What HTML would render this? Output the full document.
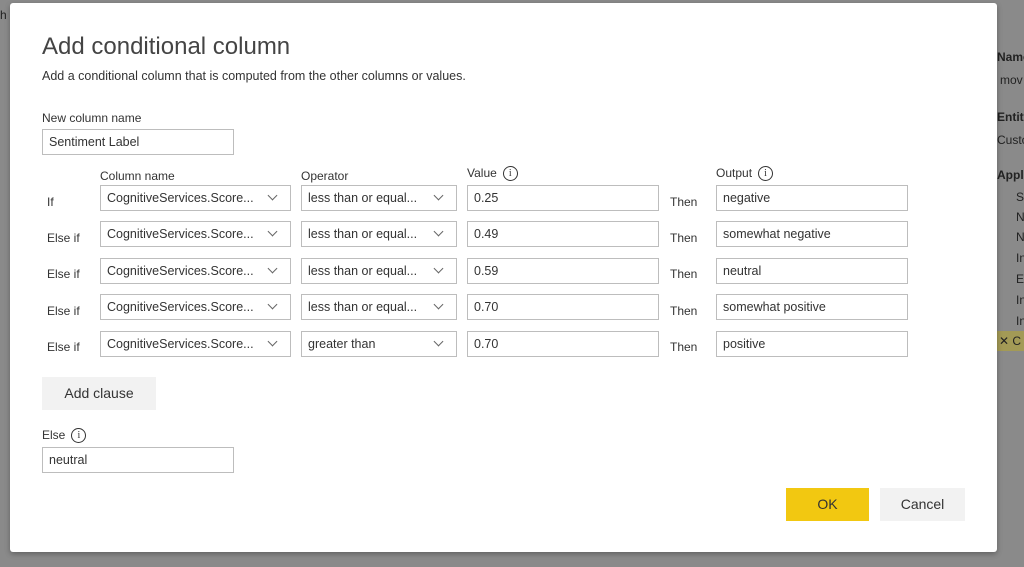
<!DOCTYPE html>
<html><head><meta charset="utf-8"><style>
body{margin:0;width:1024px;height:567px;background:#8a8a8a;font-family:"Liberation Sans","DejaVu Sans",sans-serif;position:relative;overflow:hidden;color:#222}
.a{position:absolute;white-space:nowrap}
.dlg{position:absolute;left:10px;top:3px;width:987px;height:549px;background:#fff;border-radius:3px;box-shadow:0 2px 6px rgba(0,0,0,.3)}
.box{position:absolute;border:1px solid #bdbdbd;background:#fff;box-sizing:border-box;height:26px;font-size:12.5px;line-height:24px;padding-left:6px;color:#333}
.lbl{font-size:12px;color:#333}
.chev{position:absolute;right:14px;top:6px;width:6px;height:6px;border-right:1px solid #666;border-bottom:1px solid #666;transform:rotate(45deg)}
.info{display:inline-block;width:13px;height:13px;border:1px solid #333;border-radius:50%;font-size:10px;line-height:13px;text-align:center;vertical-align:middle;margin-left:6px;font-family:"Liberation Serif",serif}
.side{position:absolute;left:997px;font-size:12px;color:#222}
</style></head><body>
<div class="a" style="left:0;top:8px;font-size:12px;color:#222">h</div>
<div class="side" style="top:50px;font-weight:bold">Name</div>
<div class="side" style="top:73px;left:1000px">mov</div>
<div class="side" style="top:110px;font-weight:bold">Entity</div>
<div class="side" style="top:133px">Custo</div>
<div class="side" style="top:168px;font-weight:bold">Appli</div>
<div class="side" style="top:190px;left:1016px">Se</div>
<div class="side" style="top:210px;left:1016px">N</div>
<div class="side" style="top:230px;left:1016px">N</div>
<div class="side" style="top:251px;left:1016px">In</div>
<div class="side" style="top:272px;left:1016px">Ex</div>
<div class="side" style="top:293px;left:1016px">In</div>
<div class="side" style="top:314px;left:1016px">In</div>
<div style="position:absolute;left:997px;top:331px;width:27px;height:20px;background:#a39a56"></div>
<div class="side" style="top:334px;left:999px">✕ C</div>
<div class="dlg"></div>
<div class="a" style="left:42px;top:33px;font-size:24px;color:#444">Add conditional column</div>
<div class="a" style="left:42px;top:69px;font-size:12.5px;color:#333">Add a conditional column that is computed from the other columns or values.</div>
<div class="a lbl" style="left:42px;top:111px">New column name</div>
<div class="box" style="left:42px;top:129px;width:192px">Sentiment Label</div>
<div class="a lbl" style="left:100px;top:169px">Column name</div>
<div class="a lbl" style="left:301px;top:169px">Operator</div>
<div class="a lbl" style="left:467px;top:166px">Value<span class="info">i</span></div>
<div class="a lbl" style="left:716px;top:166px">Output<span class="info">i</span></div>

<div class="a lbl" style="left:47px;top:195px">If</div>
<div class="box" style="left:100px;top:185px;width:191px">CognitiveServices.Score...<span class="chev"></span></div>
<div class="box" style="left:301px;top:185px;width:156px">less than or equal...<span class="chev"></span></div>
<div class="box" style="left:467px;top:185px;width:192px">0.25</div>
<div class="a lbl" style="left:670px;top:195px">Then</div>
<div class="box" style="left:716px;top:185px;width:192px">negative</div>

<div class="a lbl" style="left:47px;top:231px">Else if</div>
<div class="box" style="left:100px;top:221px;width:191px">CognitiveServices.Score...<span class="chev"></span></div>
<div class="box" style="left:301px;top:221px;width:156px">less than or equal...<span class="chev"></span></div>
<div class="box" style="left:467px;top:221px;width:192px">0.49</div>
<div class="a lbl" style="left:670px;top:231px">Then</div>
<div class="box" style="left:716px;top:221px;width:192px">somewhat negative</div>

<div class="a lbl" style="left:47px;top:267px">Else if</div>
<div class="box" style="left:100px;top:258px;width:191px">CognitiveServices.Score...<span class="chev"></span></div>
<div class="box" style="left:301px;top:258px;width:156px">less than or equal...<span class="chev"></span></div>
<div class="box" style="left:467px;top:258px;width:192px">0.59</div>
<div class="a lbl" style="left:670px;top:267px">Then</div>
<div class="box" style="left:716px;top:258px;width:192px">neutral</div>

<div class="a lbl" style="left:47px;top:304px">Else if</div>
<div class="box" style="left:100px;top:294px;width:191px">CognitiveServices.Score...<span class="chev"></span></div>
<div class="box" style="left:301px;top:294px;width:156px">less than or equal...<span class="chev"></span></div>
<div class="box" style="left:467px;top:294px;width:192px">0.70</div>
<div class="a lbl" style="left:670px;top:304px">Then</div>
<div class="box" style="left:716px;top:294px;width:192px">somewhat positive</div>

<div class="a lbl" style="left:47px;top:340px">Else if</div>
<div class="box" style="left:100px;top:331px;width:191px">CognitiveServices.Score...<span class="chev"></span></div>
<div class="box" style="left:301px;top:331px;width:156px">greater than<span class="chev"></span></div>
<div class="box" style="left:467px;top:331px;width:192px">0.70</div>
<div class="a lbl" style="left:670px;top:340px">Then</div>
<div class="box" style="left:716px;top:331px;width:192px">positive</div>

<div class="a" style="left:42px;top:377px;width:114px;height:33px;background:#f2f2f2;font-size:14px;line-height:33px;text-align:center;color:#333">Add clause</div>
<div class="a lbl" style="left:42px;top:428px">Else<span class="info">i</span></div>
<div class="box" style="left:42px;top:447px;width:192px">neutral</div>
<div class="a" style="left:786px;top:488px;width:83px;height:33px;background:#f2c811;font-size:14px;line-height:33px;text-align:center;color:#333">OK</div>
<div class="a" style="left:880px;top:488px;width:85px;height:33px;background:#f2f2f2;font-size:14px;line-height:33px;text-align:center;color:#333">Cancel</div>
</body></html>
